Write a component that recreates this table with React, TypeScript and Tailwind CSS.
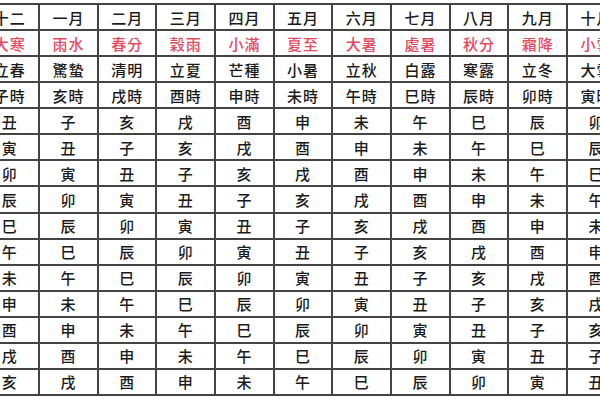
import React from "react";

const B = ["子", "丑", "寅", "卯", "辰", "巳", "午", "未", "申", "酉", "戌", "亥"];
const months = ["十二", "一月", "二月", "三月", "四月", "五月", "六月", "七月", "八月", "九月", "十月"];
const zhong = ["大寒", "雨水", "春分", "穀雨", "小滿", "夏至", "大暑", "處暑", "秋分", "霜降", "小雪"];
const jie = ["立春", "驚蟄", "清明", "立夏", "芒種", "小暑", "立秋", "白露", "寒露", "立冬", "大雪"];
const shi = ["子時", "亥時", "戌時", "酉時", "申時", "未時", "午時", "巳時", "辰時", "卯時", "寅時"];

export default function App() {
  const cells: React.ReactNode[] = [];
  const cell = "bg-white flex items-center justify-center tracking-[1px]";
  months.forEach((m, i) => cells.push(<div key={"m" + i} className={cell + " text-[#1a1a1a]"}>{m}</div>));
  zhong.forEach((m, i) => cells.push(<div key={"z" + i} className={cell + " text-[#e34a62]"}>{m}</div>));
  jie.forEach((m, i) => cells.push(<div key={"j" + i} className={cell + " text-[#1a1a1a]"}>{m}</div>));
  shi.forEach((m, i) => cells.push(<div key={"s" + i} className={cell + " text-[#1a1a1a]"}>{m}</div>));
  for (let r = 0; r < 11; r++) {
    for (let c = 0; c < 11; c++) {
      const idx = (((1 - c + r) % 12) + 12) % 12;
      cells.push(
        <div key={`d${r}-${c}`} className={cell + " text-[#1a1a1a]"}>
          {B[idx]}
        </div>
      );
    }
  }
  return (
    <div className="w-[600px] h-[400px] overflow-hidden bg-white">
      <div
        className="ml-[-20.5px] mt-[3px] w-max grid grid-cols-[repeat(11,56.67px)] auto-rows-[24.07px] gap-[2px] p-[2px] bg-[#444444] text-[15px] leading-none font-medium"
        style={{ fontFamily: '"Noto Sans CJK TC", "Noto Sans CJK SC", sans-serif' }}
      >
        {cells}
      </div>
    </div>
  );
}
